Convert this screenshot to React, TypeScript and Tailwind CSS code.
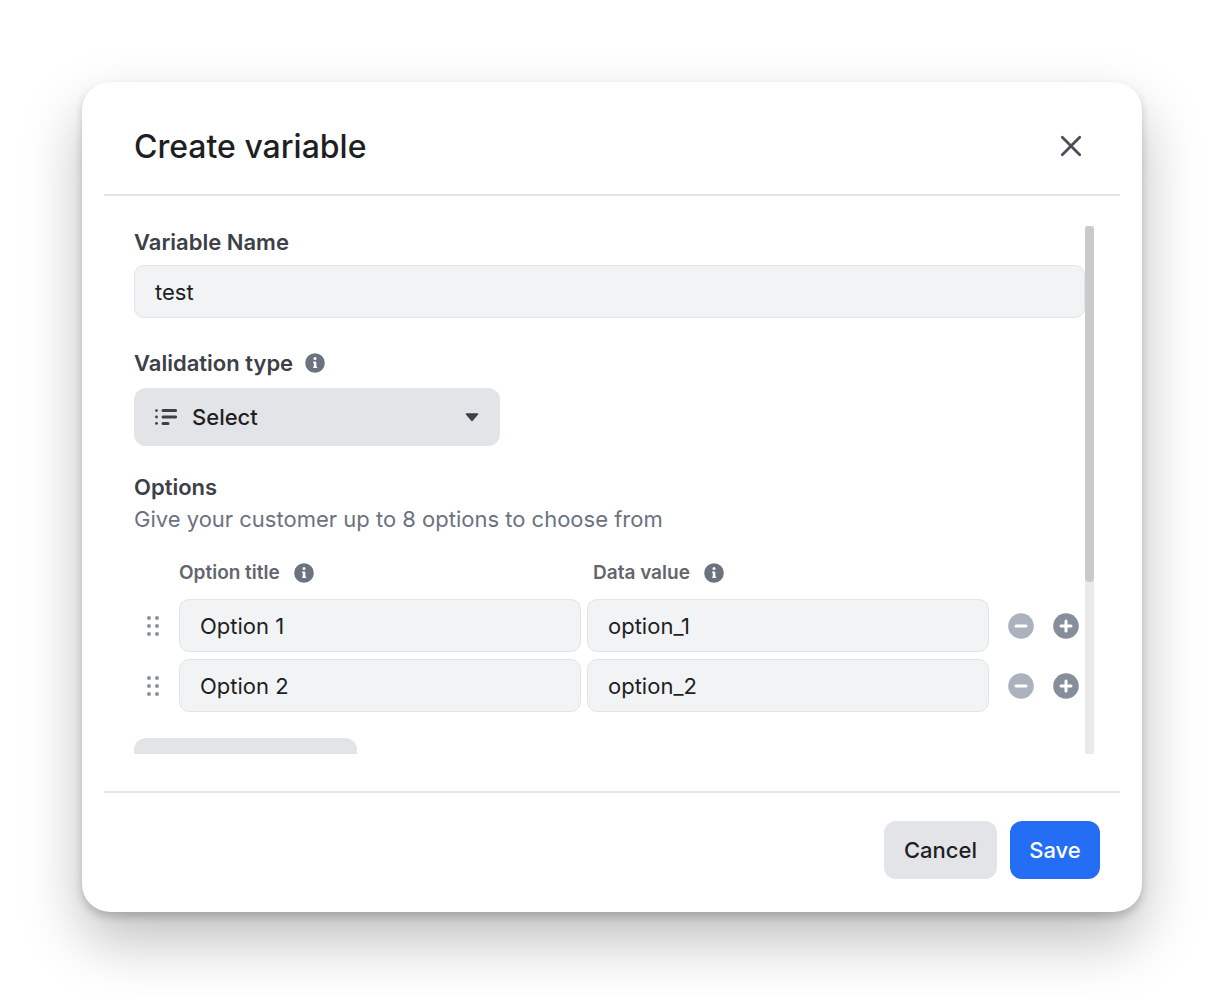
import { useState } from "react";

type Option = {
  id: number;
  title: string;
  value: string;
};

const initialOptions: Option[] = [
  { id: 1, title: "Option 1", value: "option_1" },
  { id: 2, title: "Option 2", value: "option_2" },
];

const fieldClass =
  "w-full min-w-0 h-[53px] px-5 rounded-[10px] border border-[#e3e4e8] bg-[#f2f3f5] text-[22px] text-[#1d1f23] outline-none";

function InfoIcon() {
  return (
    <svg viewBox="0 0 20 20" className="size-5 shrink-0" aria-hidden="true">
      <circle cx="10" cy="10" r="9.8" fill="#6b7280" />
      <circle cx="10" cy="5.5" r="1.5" fill="#fff" />
      <path d="M8.7 9.2h1.7v5M8.9 14.2h2.6" fill="none" stroke="#fff" strokeWidth="1.6" strokeLinecap="round" strokeLinejoin="round" />
      <path d="M10 9.4v4.8" stroke="#fff" strokeWidth="2.4" />
    </svg>
  );
}

function CloseIcon() {
  return (
    <svg viewBox="0 0 22 22" className="size-[22px]" aria-hidden="true">
      <path d="M2.3 2.3l17.4 17.4M19.7 2.3L2.3 19.7" stroke="#4b4e5a" strokeWidth="2.8" strokeLinecap="round" />
    </svg>
  );
}

function ListIcon() {
  return (
    <svg viewBox="0 0 22 16" className="w-[22px] h-4" aria-hidden="true">
      <g fill="#3d4048">
        <circle cx="1.5" cy="1.6" r="1.4" />
        <circle cx="1.5" cy="8" r="1.4" />
        <circle cx="1.5" cy="14.4" r="1.4" />
      </g>
      <path d="M8 1.6h12.6M8 8h12.6M8 14.4h5" stroke="#3d4048" strokeWidth="3" strokeLinecap="round" />
    </svg>
  );
}

function CaretIcon() {
  return (
    <svg viewBox="0 0 14 9" className="w-[14px] h-[9px]" aria-hidden="true">
      <path d="M1.4 1h11.2L7 7.6z" fill="#3d4048" stroke="#3d4048" strokeWidth="1.4" strokeLinejoin="round" />
    </svg>
  );
}

function DragIcon() {
  return (
    <svg viewBox="0 0 14 22" className="w-[14px] h-[22px]" aria-hidden="true">
      <g fill="#8a909e">
        <circle cx="3" cy="3" r="2" />
        <circle cx="11" cy="3" r="2" />
        <circle cx="3" cy="11" r="2" />
        <circle cx="11" cy="11" r="2" />
        <circle cx="3" cy="19" r="2" />
        <circle cx="11" cy="19" r="2" />
      </g>
    </svg>
  );
}

function MinusIcon() {
  return (
    <svg viewBox="0 0 26 26" className="size-[26px]" aria-hidden="true">
      <circle cx="13" cy="13" r="12.8" fill="#acb2bd" />
      <path d="M8 13h10" stroke="#fff" strokeWidth="3" strokeLinecap="round" />
    </svg>
  );
}

function PlusIcon() {
  return (
    <svg viewBox="0 0 26 26" className="size-[26px]" aria-hidden="true">
      <circle cx="13" cy="13" r="12.8" fill="#868d9b" />
      <path d="M8 13h10M13 8v10" stroke="#fff" strokeWidth="3" strokeLinecap="round" />
    </svg>
  );
}

export default function App() {
  const [name, setName] = useState("test");
  const [options, setOptions] = useState(initialOptions);

  const update = (id: number, patch: Partial<Option>) =>
    setOptions(options.map((o) => (o.id === id ? { ...o, ...patch } : o)));

  const remove = (id: number) => setOptions(options.filter((o) => o.id !== id));

  const add = () => {
    const next = options.length + 1;
    setOptions([...options, { id: Date.now(), title: `Option ${next}`, value: `option_${next}` }]);
  };

  return (
    <main className="min-h-screen bg-white p-[82px] font-['Inter',sans-serif] text-[22px] text-[#1d1f23]">
      <section
        role="dialog"
        aria-labelledby="dialog-title"
        className="rounded-[28px] bg-white px-[22px] shadow-[0_5px_8px_rgba(0,0,0,0.18),0_28px_60px_rgba(0,0,0,0.26)]"
      >
        {/* Header */}
        <header className="flex items-center justify-between h-[114px] pt-4 pl-[30px] pr-[38px] border-b-2 border-[#e3e4e8]">
          <h1 id="dialog-title" className="pt-[2px] text-[32px] leading-10 font-medium">
            Create variable
          </h1>
          <button type="button" aria-label="Close">
            <CloseIcon />
          </button>
        </header>

        {/* Scrollable form */}
        <div className="flex h-[528px] mt-[30px] mb-[37px] ml-[30px] mr-[26px]">
          <div className="flex-1 min-w-0 overflow-y-auto [scrollbar-width:none]">
            <label htmlFor="name" className="block leading-8 font-semibold text-[#3d4048]">
              Variable Name
            </label>
            <input
              id="name"
              value={name}
              onChange={(e) => setName(e.target.value)}
              className={`${fieldClass} mt-[7px]`}
            />

            <div className="flex items-center gap-3 mt-[29px]">
              <label htmlFor="type" className="leading-8 font-semibold text-[#3d4048]">
                Validation type
              </label>
              <InfoIcon />
            </div>
            <div className="relative w-[366px] mt-[9px]">
              <select
                id="type"
                className="appearance-none w-full h-[58px] pl-[58px] pr-12 rounded-xl bg-[#e3e4e8] font-medium outline-none"
              >
                <option>Select</option>
              </select>
              <span className="absolute inset-y-0 left-[21px] flex items-center pointer-events-none">
                <ListIcon />
              </span>
              <span className="absolute inset-y-0 right-[21px] flex items-center pointer-events-none">
                <CaretIcon />
              </span>
            </div>

            <h2 className="mt-[25px] leading-8 font-semibold text-[#3d4048]">Options</h2>
            <p className="leading-8 text-[#6b7280]">Give your customer up to 8 options to choose from</p>

            <div className="grid grid-cols-[39px_1fr_1fr_90px] gap-x-[6px] mt-[22px] text-[19px] leading-8 font-semibold text-[#63666e]">
              <div className="col-start-2 flex items-center gap-[14px]">
                Option title
                <InfoIcon />
              </div>
              <div className="flex items-center gap-[14px] pl-[6px]">
                Data value
                <InfoIcon />
              </div>
            </div>

            <ul className="grid gap-[7px] mt-[10px]">
              {options.map((o) => (
                <li key={o.id} className="grid grid-cols-[39px_1fr_1fr_90px] items-center gap-x-[6px]">
                  <button type="button" aria-label={`Move ${o.title}`} className="pl-3 cursor-grab">
                    <DragIcon />
                  </button>
                  <input
                    aria-label="Option title"
                    value={o.title}
                    onChange={(e) => update(o.id, { title: e.target.value })}
                    className={fieldClass}
                  />
                  <input
                    aria-label="Data value"
                    value={o.value}
                    onChange={(e) => update(o.id, { value: e.target.value })}
                    className={fieldClass}
                  />
                  <div className="flex gap-[19px] pl-[13px]">
                    <button type="button" aria-label={`Remove ${o.title}`} onClick={() => remove(o.id)}>
                      <MinusIcon />
                    </button>
                    <button type="button" aria-label={`Add after ${o.title}`} onClick={add}>
                      <PlusIcon />
                    </button>
                  </div>
                </li>
              ))}
            </ul>

            <button
              type="button"
              aria-label="Add option"
              onClick={add}
              className="w-[223px] h-[58px] mt-[26px] rounded-xl bg-[#e3e4e8]"
            />
          </div>

          <div className="w-[9px] shrink-0 bg-[#eaeaea]" aria-hidden="true">
            <div className="h-[356px] rounded-[4px] bg-[#cacaca]" />
          </div>
        </div>

        {/* Footer */}
        <footer className="flex justify-end gap-[13px] pt-7 pb-[33px] pr-5 border-t-2 border-[#e3e4e8] font-medium">
          <button type="button" className="h-[58px] w-[113px] rounded-xl bg-[#e3e4e8]">
            Cancel
          </button>
          <button type="button" className="h-[58px] w-[90px] rounded-xl bg-[#236ef4] text-white">
            Save
          </button>
        </footer>
      </section>
    </main>
  );
}
